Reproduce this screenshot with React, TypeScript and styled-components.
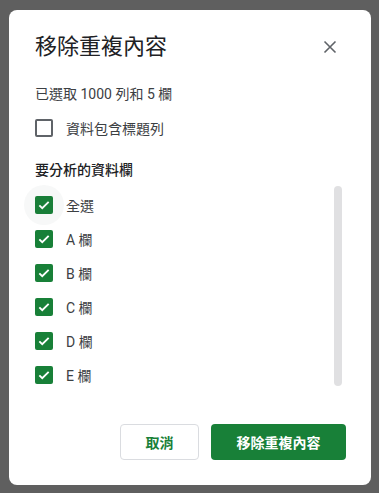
import React from "react";
import styled, { createGlobalStyle } from "styled-components";

const GlobalStyle = createGlobalStyle`
  html, body {
    margin: 0;
    padding: 0;
    background: #5f5f5f;
  }
  body {
    font-family: Roboto, "Noto Sans CJK TC", "Noto Sans", sans-serif;
    color: #202124;
  }
`;

const Backdrop = styled.div`
  width: 379px;
  height: 493px;
  padding: 10px 8px 8px 9px;
  box-sizing: border-box;
`;

const Dialog = styled.div`
  width: 362px;
  height: 475px;
  background: #ffffff;
  border-radius: 8px;
  box-sizing: border-box;
  padding: 23px 0 25px 26px;
  display: flex;
  flex-direction: column;
`;

const Header = styled.div`
  display: flex;
  align-items: center;
  justify-content: space-between;
  padding-right: 29px;
`;

const Title = styled.h1`
  margin: 0;
  font-size: 22px;
  line-height: 28px;
  font-weight: 400;
  color: #202124;
`;

const CloseButton = styled.button`
  width: 24px;
  height: 24px;
  padding: 0;
  border: none;
  background: none;
  display: flex;
  align-items: center;
  justify-content: center;
  color: #5f6368;
  cursor: pointer;
`;

const Info = styled.div`
  margin-top: 23px;
  font-size: 14px;
  line-height: 20px;
  color: #3c4043;
`;

const Row = styled.label`
  display: flex;
  align-items: center;
  height: 34px;
  gap: 13px;
  font-size: 14px;
  color: #3c4043;
`;

const HeaderRow = styled(Row)`
  margin-top: 15px;
  height: 18px;
`;

const Box = styled.span<{ $checked?: boolean; $focus?: boolean }>`
  position: relative;
  width: 18px;
  height: 18px;
  box-sizing: border-box;
  border-radius: 2px;
  flex: none;
  display: flex;
  align-items: center;
  justify-content: center;
  background: ${(p) => (p.$checked ? "#188038" : "#ffffff")};
  border: ${(p) => (p.$checked ? "none" : "2px solid #5f6368")};

  &::before {
    content: "";
    display: ${(p) => (p.$focus ? "block" : "none")};
    position: absolute;
    left: -11px;
    top: -11px;
    width: 40px;
    height: 40px;
    border-radius: 50%;
    background: rgba(60, 64, 67, 0.04);
  }
`;

const SectionTitle = styled.div`
  margin-top: 23px;
  font-size: 14px;
  line-height: 20px;
  font-weight: 500;
  color: #202124;
`;

const ListArea = styled.div`
  margin-top: 6px;
  height: 200px;
  display: flex;
  padding-right: 29px;
`;

const List = styled.div`
  flex: 1;
  padding-top: 2px;
`;

const Scrollbar = styled.div`
  width: 8px;
  height: 200px;
  border-radius: 4px;
  background: #e0e0e2;
`;

const Footer = styled.div`
  margin-top: auto;
  display: flex;
  justify-content: flex-end;
  gap: 12px;
  padding-right: 25px;
`;

const Button = styled.button<{ $primary?: boolean }>`
  height: 36px;
  padding: 0;
  width: ${(p) => (p.$primary ? "135px" : "79px")};
  border-radius: 4px;
  box-sizing: border-box;
  font-family: Roboto, "Noto Sans CJK TC", sans-serif;
  font-size: 14px;
  font-weight: 700;
  border: ${(p) => (p.$primary ? "none" : "1px solid #dadce0")};
  background: ${(p) => (p.$primary ? "#188038" : "#ffffff")};
  color: ${(p) => (p.$primary ? "#ffffff" : "#188038")};
`;

const Check = () => (
  <svg width="14" height="14" viewBox="0 0 24 24">
    <path d="M4 12.5l5 5L20 6.5" fill="none" stroke="#fff" strokeWidth="3.2" />
  </svg>
);

const columns = ["全選", "A 欄", "B 欄", "C 欄", "D 欄", "E 欄"];

const App = () => {
  return (
    <>
      <GlobalStyle />
      <Backdrop>
        <Dialog>
          <Header>
            <Title>移除重複內容</Title>
            <CloseButton aria-label="關閉">
              <svg width="14" height="14" viewBox="0 0 14 14">
                <path d="M1.5 1.5l11 11M12.5 1.5l-11 11" stroke="#5f6368" strokeWidth="1.6" />
              </svg>
            </CloseButton>
          </Header>
          <Info>已選取 1000 列和 5 欄</Info>
          <HeaderRow>
            <Box />
            資料包含標題列
          </HeaderRow>
          <SectionTitle>要分析的資料欄</SectionTitle>
          <ListArea>
            <List>
              {columns.map((c, i) => (
                <Row key={c}>
                  <Box $checked $focus={i === 0}>
                    <Check />
                  </Box>
                  {c}
                </Row>
              ))}
            </List>
            <Scrollbar />
          </ListArea>
          <Footer>
            <Button>取消</Button>
            <Button $primary>移除重複內容</Button>
          </Footer>
        </Dialog>
      </Backdrop>
    </>
  );
};

export default App;
